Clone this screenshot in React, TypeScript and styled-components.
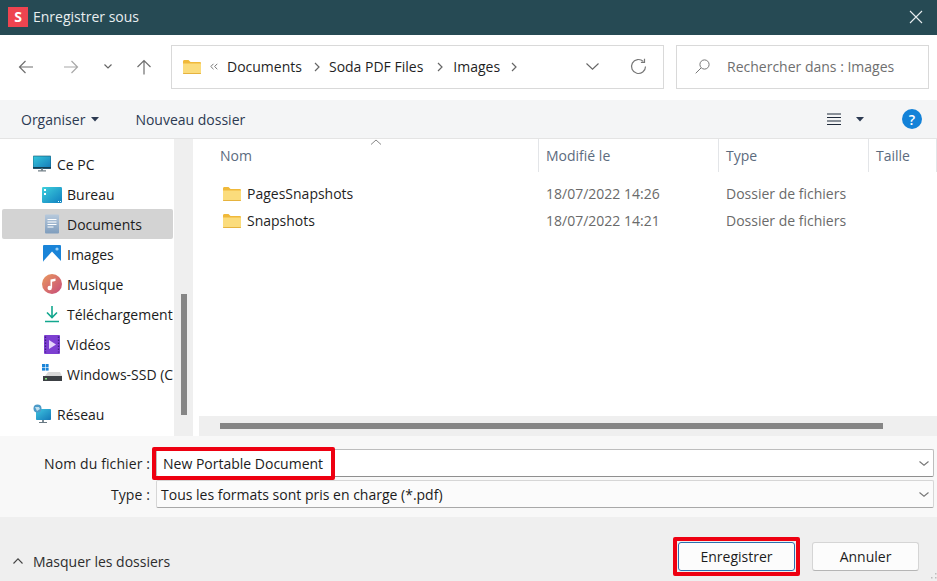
import React from 'react';
import styled, { createGlobalStyle } from 'styled-components';

const Global = createGlobalStyle`
  html, body { margin: 0; padding: 0; background: #fff; }
  body { font-family: "Open Sans", "Noto Sans", "Liberation Sans", sans-serif; font-size: 14px; color: #1c1c1c; }
  * { box-sizing: border-box; }
`;

const Dialog = styled.div`
  width: 937px; height: 581px; display: flex; flex-direction: column; overflow: hidden; position: relative;
`;
const TitleBar = styled.header`
  height: 35px; background: #264a54; color: #e8eef0; display: flex; align-items: center; padding: 0 14px 2px 8px; flex: none;
`;
const AppLogo = styled.div`
  width: 20px; height: 20px; background: #ee4450; color: #fff; font-weight: 700; font-size: 14px;
  display: flex; align-items: center; justify-content: center; margin-right: 5px;
`;
const Title = styled.span`flex: 1; font-size: 14px;`;
const NavRow = styled.div`
  height: 65px; flex: none; display: flex; align-items: center; padding: 0 8px 2px 17px; background: #fff;
`;
const NavIcon = styled.svg<{ $ml?: number }>`
  flex: none; margin-left: ${p => p.$ml ?? 0}px; display: block;
`;
const Address = styled.div`
  margin-left: 19px; width: 493px; height: 44px; border: 1px solid #d9d9d9; display: flex; align-items: center; padding-left: 11px; flex: none; font-size: 14px; color: #1f1f1f;
`;
const Crumb = styled.span<{ $ml: number }>`margin-left: ${p => p.$ml}px; white-space: nowrap;`;
const Search = styled.div`
  margin-left: 12px; width: 253px; height: 44px; border: 1px solid #d9d9d9; display: flex; align-items: center; padding-left: 18px; flex: none; color: #6f6f6f; font-size: 14px;
`;
const SearchText = styled.span`margin-left: 17px;`;
const Toolbar = styled.div`
  height: 39px; flex: none; background: #f4f5f6; border-bottom: 1px solid #e4e4e4; display: flex; align-items: center; padding: 0 15px 0 21px; color: #2c3a52; font-size: 14px;
`;
const ToolLabel = styled.span<{ $ml?: number }>`white-space: nowrap; margin-left: ${p => p.$ml ?? 0}px;`;
const Spacer = styled.div`flex: 1;`;
const Help = styled.div`
  width: 20px; height: 20px; border-radius: 50%; background: #1382d8; color: #fff; font-size: 14px; font-weight: 600;
  display: flex; align-items: center; justify-content: center; margin-left: 38px;
`;
const Main = styled.div`height: 297px; flex: none; display: flex; background: #fff;`;
const Sidebar = styled.nav`
  width: 174px; flex: none; padding: 10px 1px 0 2px; overflow: hidden; display: flex; flex-direction: column;
`;
const TreeRow = styled.div<{ $depth: number; $selected?: boolean }>`
  height: 30px; flex: none; display: flex; align-items: center; border-radius: 2px; white-space: nowrap; overflow: hidden;
  padding-left: ${p => (p.$depth ? 40 : 31)}px;
  background: ${p => (p.$selected ? '#d3d3d3' : 'transparent')};
`;
const TreeGap = styled.div`height: 10px; flex: none;`;
const TreeIcon = styled.svg<{ $depth: number }>`
  flex: none; margin-right: ${p => (p.$depth ? 5 : 6)}px; width: ${p => (p.$depth ? 20 : 18)}px; height: 20px;
`;
const VScroll = styled.div`
  width: 19px; flex: none; background: #efefef; padding: 155px 6px 0 7px;
`;
const VThumb = styled.div`height: 121px; background: #868686;`;
const ListPane = styled.div`flex: 1; margin-left: 6px; display: flex; flex-direction: column; position: relative; min-width: 0;`;
const HeaderRow = styled.div`height: 33px; display: grid; grid-template-columns: 340px 180px 150px 1fr; flex: none; color: #5c6b7e;`;
const HeaderCell = styled.div<{ $first?: boolean }>`
  display: flex; align-items: center; padding-left: ${p => (p.$first ? 21 : 7)}px;
  border-right: 1px solid #e3e5e8; white-space: nowrap; overflow: hidden;
`;
const SortCaret = styled.svg`position: absolute; left: 171px; top: 0;`;
const Rows = styled.div`flex: 1; padding-top: 8px;`;
const FileRow = styled.div`height: 27px; display: grid; grid-template-columns: 340px 180px 150px 1fr; align-items: center; color: #1f1f1f;`;
const NameCell = styled.div`display: flex; align-items: center; padding-left: 24px;`;
const FileName = styled.span`margin-left: 6px;`;
const MetaCell = styled.div`padding-left: 7px; color: #6a6a6a;`;
const HScroll = styled.div`height: 20px; flex: none; background: #efefef; padding: 7px 54px 7px 21px;`;
const HThumb = styled.div`height: 6px; background: #868686;`;
const Form = styled.div`
  height: 81px; flex: none; background: #f8f8f8; padding: 13px 3px 0 0; display: flex; flex-direction: column; gap: 3px;
`;
const FieldRow = styled.div`display: flex; align-items: center; height: 28px;`;
const FieldLabel = styled.label`width: 150px; text-align: right; flex: none; color: #1f1f1f; white-space: nowrap; letter-spacing: .1px;`;
const Field = styled.div<{ $active?: boolean }>`
  margin-left: 6px; flex: 1; height: 28px; display: flex; align-items: center; justify-content: space-between;
  padding: 0 4px 0 ${p => (p.$active ? 6 : 4)}px; border-radius: 2px; background: ${p => (p.$active ? '#fff' : '#fbfbfb')};
  border: 1px solid ${p => (p.$active ? '#bdbdbd' : '#d6d6d6')}; border-bottom-color: ${p => (p.$active ? '#8f8f8f' : '#a8a8a8')};
  color: #1c1c1c;
`;
const Footer = styled.div`
  flex: 1; background: #efefef; display: flex; align-items: flex-end; padding: 0 18px 10px 13px;
`;
const Toggle = styled.div`display: flex; align-items: center; gap: 10px; color: #2d2d2d; height: 29px; padding-top: 9px;`;
const Btn = styled.button<{ $primary?: boolean; $w: number }>`
  width: ${p => p.$w}px; height: 29px; border-radius: 3px; background: #fcfcfc; font: inherit; color: #1c1c1c; padding: 0;
  border: 1px solid ${p => (p.$primary ? '#2a6fb0' : '#d5d5d5')}; border-bottom-color: ${p => (p.$primary ? '#2a6fb0' : '#b5b5b5')};
  margin-left: ${p => (p.$primary ? 0 : 17)}px;
`;
const Highlight = styled.div<{ $x: number; $y: number; $w: number; $h: number }>`
  position: absolute; left: ${p => p.$x}px; top: ${p => p.$y}px; width: ${p => p.$w}px; height: ${p => p.$h}px;
  border: 4px solid #ee0011; border-radius: 2px; pointer-events: none;
`;
const Grip = styled.svg`position: absolute; right: 0; bottom: 0;`;

const Folder = ({ size = 18 }: { size?: number }) => (
  <svg width={size} height={16} viewBox="0 0 18 16" style={{ flex: 'none', display: 'block' }}>
    <path d="M0 2.5C0 1.7.6 1 1.3 1h4.2l2 2H16.8c.7 0 1.2.5 1.2 1.2V13.8c0 .7-.5 1.2-1.2 1.2H1.2C.5 15 0 14.5 0 13.8z" fill="#f0b93a" />
    <path d="M0 4.6h18v9.2c0 .7-.5 1.2-1.2 1.2H1.2C.5 15 0 14.5 0 13.8z" fill="#fbdc7c" />
    <path d="M0 14h18v.2c0 .5-.5.8-1 .8H1c-.5 0-1-.3-1-.8z" fill="#e6b33e" />
  </svg>
);

const Chevron = ({ w = 10, h = 6, color = '#555', dir = 'down' }: { w?: number; h?: number; color?: string; dir?: 'down' | 'up' }) => (
  <svg width={w} height={h} viewBox={`0 0 ${w} ${h}`} style={{ flex: 'none', display: 'block' }}>
    <path d={dir === 'down' ? `M.5 .5L${w / 2} ${h - .8}L${w - .5} .5` : `M.5 ${h - .5}L${w / 2} .8L${w - .5} ${h - .5}`} fill="none" stroke={color} strokeWidth="1.1" />
  </svg>
);

const Sep = ({ ml }: { ml: number }) => (
  <svg width="6" height="10" viewBox="0 0 6 10" style={{ marginLeft: ml, flex: 'none' }}>
    <path d="M1 1l4 4-4 4" fill="none" stroke="#666" strokeWidth="1.2" />
  </svg>
);

const Caret = ({ ml }: { ml: number }) => (
  <svg width="8" height="5" viewBox="0 0 8 5" style={{ marginLeft: ml, flex: 'none' }}>
    <path d="M0 0h8L4 4.5z" fill="#2c3a52" />
  </svg>
);

const icons: Record<string, React.ReactNode> = {
  pc: (
    <>
      <defs><linearGradient id="pcg" x1="0" y1="0" x2="1" y2="1"><stop offset="0" stopColor="#35c8dc" /><stop offset="1" stopColor="#1478b8" /></linearGradient></defs>
      <rect x="0" y="2" width="18" height="12.5" rx=".8" fill="url(#pcg)" stroke="#0f4a66" strokeWidth=".6" />
      <rect x="0" y="13" width="18" height="1.6" fill="#123e55" />
      <rect x="8" y="14.5" width="2" height="2" fill="#7a8a94" />
      <rect x="5" y="16.4" width="8" height="1" fill="#50606a" />
    </>
  ),
  desk: (
    <>
      <defs><linearGradient id="dg" x1="0" y1="0" x2="1" y2="1"><stop offset="0" stopColor="#3fd0dc" /><stop offset="1" stopColor="#0f7fc0" /></linearGradient></defs>
      <rect x="0" y="3" width="20" height="16" rx="1.2" fill="url(#dg)" />
      <rect x="2" y="5" width="2" height="2" fill="#fff" />
      <rect x="2" y="9" width="2" height="2" fill="#fff" />
      <rect x="16" y="17" width="1" height="1" fill="#dff" />
      <rect x="18" y="17" width="1" height="1" fill="#dff" />
    </>
  ),
  doc: (
    <>
      <defs><linearGradient id="docg" x1="0" y1="0" x2="0" y2="1"><stop offset="0" stopColor="#b7c9dc" /><stop offset="1" stopColor="#7f9dbd" /></linearGradient></defs>
      <rect x="3" y="0.5" width="14" height="19" rx="1" fill="url(#docg)" />
      <path d="M5.5 5.5h9M5.5 8h9M5.5 10.5h9M5.5 13h6" stroke="#fff" strokeWidth="1.1" />
    </>
  ),
  img: (
    <>
      <rect x="1" y="1" width="18" height="18" rx="1" fill="#1a84d8" />
      <path d="M1 17.5L10 7.5l9 9.5v2H1z" fill="#fff" />
      <circle cx="15" cy="5" r="1.6" fill="#9fd4f8" />
    </>
  ),
  music: (
    <>
      <defs><linearGradient id="mg" x1="0" y1="0" x2="1" y2="1"><stop offset="0" stopColor="#ea9a5e" /><stop offset="1" stopColor="#c64a7a" /></linearGradient></defs>
      <circle cx="10" cy="10" r="10" fill="url(#mg)" />
      <path d="M8.5 13.5V5.5l5-1v2.5l-3.4.7v6.3" fill="#fff" />
      <circle cx="7.7" cy="14" r="2.2" fill="#fff" />
    </>
  ),
  dl: (
    <>
      <path d="M10 2v11M5 8.5l5 5 5-5" fill="none" stroke="#12a78e" strokeWidth="1.6" />
      <path d="M3 17.5h14" stroke="#12a78e" strokeWidth="1.6" />
    </>
  ),
  vid: (
    <>
      <rect x="2" y="1" width="16" height="19" rx="1" fill="#7d3fd1" />
      <path d="M7 6v9l7-4.5z" fill="#e4d4fb" />
      <path d="M3.5 2.5v16M16.5 2.5v16" stroke="#3f1d80" strokeWidth="1.3" strokeDasharray="1.4 1.6" />
    </>
  ),
  ssd: (
    <>
      <rect x="0" y="0" width="3" height="3" fill="#1a84d8" />
      <rect x="3.6" y="0" width="3" height="3" fill="#1a84d8" />
      <rect x="0" y="3.6" width="3" height="3" fill="#1a84d8" />
      <rect x="3.6" y="3.6" width="3" height="3" fill="#1a84d8" />
      <path d="M3 12l3-4h12l2 4z" fill="#d8d8d8" />
      <rect x="1" y="12" width="19" height="5" fill="#3c4044" />
      <rect x="3" y="14" width="2" height="1.5" fill="#7fe07f" />
    </>
  ),
  net: (
    <>
      <defs><linearGradient id="ng" x1="0" y1="0" x2="1" y2="1"><stop offset="0" stopColor="#3fc6e0" /><stop offset="1" stopColor="#1478b8" /></linearGradient></defs>
      <rect x="3" y="5" width="15" height="11" rx=".8" fill="url(#ng)" />
      <rect x="9" y="16" width="2" height="2" fill="#7a8a94" />
      <rect x="6" y="18" width="8" height="1" fill="#6a7a84" />
      <circle cx="4.5" cy="4.5" r="4" fill="#4d9bc8" />
      <path d="M2 3h4l1 2-3 2z" fill="#bfe0ef" />
    </>
  ),
};

const tree = [
  { label: 'Bureau', icon: 'desk' },
  { label: 'Documents', icon: 'doc', selected: true },
  { label: 'Images', icon: 'img' },
  { label: 'Musique', icon: 'music' },
  { label: 'Téléchargements', icon: 'dl' },
  { label: 'Vidéos', icon: 'vid' },
  { label: 'Windows-SSD (C:)', icon: 'ssd' },
];

const files = [
  { name: 'PagesSnapshots', date: '18/07/2022 14:26' },
  { name: 'Snapshots', date: '18/07/2022 14:21' },
];

export default function App() {
  return (
    <Dialog>
      <Global />
      <TitleBar>
        <AppLogo>S</AppLogo>
        <Title>Enregistrer sous</Title>
        <svg width="14" height="14" viewBox="0 0 14 14"><path d="M1 1l12 12M13 1L1 13" stroke="#e8eef0" strokeWidth="1.1" /></svg>
      </TitleBar>
      <NavRow>
        <NavIcon width="16" height="14" viewBox="0 0 16 14" $ml={1}><path d="M15 7H1.5M7.5 1L1.5 7l6 6" fill="none" stroke="#6f6f6f" strokeWidth="1.2" /></NavIcon>
        <NavIcon width="16" height="14" viewBox="0 0 16 14" $ml={29}><path d="M1 7h13.5M8.5 1l6 6-6 6" fill="none" stroke="#a8a8a8" strokeWidth="1.2" /></NavIcon>
        <NavIcon width="8" height="5" viewBox="0 0 8 5" $ml={25}><path d="M.5.5L4 4 7.5.5" fill="none" stroke="#666" strokeWidth="1.2" /></NavIcon>
        <NavIcon width="16" height="16" viewBox="0 0 16 16" $ml={24}><path d="M8 15.5V1.5M1.5 8L8 1.5 14.5 8" fill="none" stroke="#6f6f6f" strokeWidth="1.2" /></NavIcon>
        <Address>
          <Folder />
          <svg width="8" height="7" viewBox="0 0 8 7" style={{ marginLeft: 9, flex: 'none' }}><path d="M3.5.8L.8 3.5l2.7 2.7M7.3.8L4.6 3.5l2.7 2.7" fill="none" stroke="#777" strokeWidth="1" /></svg>
          <Crumb $ml={9}>Documents</Crumb>
          <Sep ml={12} />
          <Crumb $ml={9}>Soda PDF Files</Crumb>
          <Sep ml={14} />
          <Crumb $ml={10}>Images</Crumb>
          <Sep ml={11} />
          <Spacer />
          <Chevron w={13} h={7} color="#666" />
          <NavIcon width="17" height="17" viewBox="0 0 17 17" $ml={31} style={{ marginRight: 16 }}>
            <path d="M15.5 8.5a7 7 0 1 1-2.2-5.1" fill="none" stroke="#777" strokeWidth="1.2" />
            <path d="M14.5 .8v3.6h-3.6" fill="none" stroke="#777" strokeWidth="1.2" />
          </NavIcon>
        </Address>
        <Search>
          <svg width="15" height="15" viewBox="0 0 15 15" style={{ flex: 'none' }}>
            <circle cx="9.5" cy="5.5" r="4.6" fill="none" stroke="#777" strokeWidth="1" />
            <path d="M6 9L.7 14.3" stroke="#777" strokeWidth="1" />
          </svg>
          <SearchText>Rechercher dans : Images</SearchText>
        </Search>
      </NavRow>
      <Toolbar>
        <ToolLabel>Organiser</ToolLabel>
        <Caret ml={6} />
        <ToolLabel $ml={36}>Nouveau dossier</ToolLabel>
        <Spacer />
        <svg width="14" height="13" viewBox="0 0 14 13" style={{ flex: 'none' }}><path d="M0 1h14M0 4.5h14M0 8h14M0 11.5h14" stroke="#1f2a3a" strokeWidth="1" /></svg>
        <Caret ml={15} />
        <Help>?</Help>
      </Toolbar>
      <Main>
        <Sidebar>
          <TreeRow $depth={0}>
            <TreeIcon $depth={0} viewBox="0 0 18 20">{icons.pc}</TreeIcon>Ce PC
          </TreeRow>
          {tree.map(t => (
            <TreeRow key={t.label} $depth={1} $selected={!!t.selected}>
              <TreeIcon $depth={1} viewBox="0 0 20 20">{icons[t.icon]}</TreeIcon>{t.label}
            </TreeRow>
          ))}
          <TreeGap />
          <TreeRow $depth={0}>
            <TreeIcon $depth={0} viewBox="0 0 18 20">{icons.net}</TreeIcon>Réseau
          </TreeRow>
        </Sidebar>
        <VScroll><VThumb /></VScroll>
        <ListPane>
          <SortCaret width="12" height="6" viewBox="0 0 12 6"><path d="M1 5.5L6 1l5 4.5" fill="none" stroke="#888" strokeWidth="1" /></SortCaret>
          <HeaderRow>
            <HeaderCell $first>Nom</HeaderCell>
            <HeaderCell>Modifié le</HeaderCell>
            <HeaderCell>Type</HeaderCell>
            <HeaderCell>Taille</HeaderCell>
          </HeaderRow>
          <Rows>
            {files.map(f => (
              <FileRow key={f.name}>
                <NameCell><Folder /><FileName>{f.name}</FileName></NameCell>
                <MetaCell>{f.date}</MetaCell>
                <MetaCell>Dossier de fichiers</MetaCell>
              </FileRow>
            ))}
          </Rows>
          <HScroll><HThumb /></HScroll>
        </ListPane>
      </Main>
      <Form>
        <FieldRow>
          <FieldLabel>Nom du fichier :</FieldLabel>
          <Field $active>New Portable Document<Chevron w={10} h={5} color="#777" /></Field>
        </FieldRow>
        <FieldRow>
          <FieldLabel>Type :</FieldLabel>
          <Field>Tous les formats sont pris en charge (*.pdf)<Chevron w={10} h={5} color="#777" /></Field>
        </FieldRow>
      </Form>
      <Footer>
        <Toggle><Chevron dir="up" w={10} h={6} color="#444" />Masquer les dossiers</Toggle>
        <Spacer />
        <Btn $primary $w={117}>Enregistrer</Btn>
        <Btn $w={107}>Annuler</Btn>
      </Footer>
      <Highlight $x={152} $y={447} $w={183} $h={33} />
      <Highlight $x={673} $y={537} $w={127} $h={39} />
      <Grip width="10" height="10" viewBox="0 0 10 10">
        <path d="M8 2h1.5v1.5H8zM8 6h1.5v1.5H8zM4 6h1.5v1.5H4z" fill="#bdbdbd" />
      </Grip>
    </Dialog>
  );
}
